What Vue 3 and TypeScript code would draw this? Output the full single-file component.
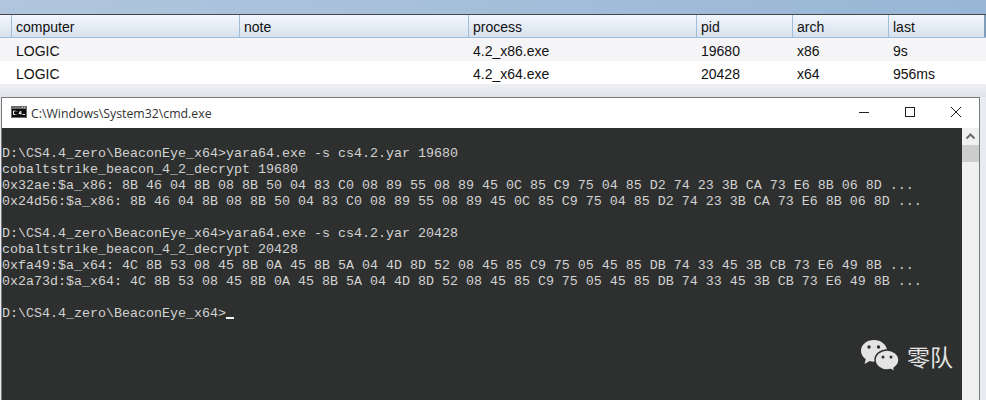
<script setup lang="ts">
const columns = [
  { name: 'computer', width: 228 },
  { name: 'note', width: 229 },
  { name: 'process', width: 228 },
  { name: 'pid', width: 96 },
  { name: 'arch', width: 96 },
  { name: 'last', width: 96 },
]
const rows = [
  ['LOGIC', '', '4.2_x86.exe', '19680', 'x86', '9s'],
  ['LOGIC', '', '4.2_x64.exe', '20428', 'x64', '956ms'],
]
const lines = [
  '',
  'D:\\CS4.4_zero\\BeaconEye_x64>yara64.exe -s cs4.2.yar 19680',
  'cobaltstrike_beacon_4_2_decrypt 19680',
  '0x32ae:$a_x86: 8B 46 04 8B 08 8B 50 04 83 C0 08 89 55 08 89 45 0C 85 C9 75 04 85 D2 74 23 3B CA 73 E6 8B 06 8D ...',
  '0x24d56:$a_x86: 8B 46 04 8B 08 8B 50 04 83 C0 08 89 55 08 89 45 0C 85 C9 75 04 85 D2 74 23 3B CA 73 E6 8B 06 8D ...',
  '',
  'D:\\CS4.4_zero\\BeaconEye_x64>yara64.exe -s cs4.2.yar 20428',
  'cobaltstrike_beacon_4_2_decrypt 20428',
  '0xfa49:$a_x64: 4C 8B 53 08 45 8B 0A 45 8B 5A 04 4D 8D 52 08 45 85 C9 75 05 45 85 DB 74 33 45 3B CB 73 E6 49 8B ...',
  '0x2a73d:$a_x64: 4C 8B 53 08 45 8B 0A 45 8B 5A 04 4D 8D 52 08 45 85 C9 75 05 45 85 DB 74 33 45 3B CB 73 E6 49 8B ...',
  '',
]
</script>

<template>
  <div class="page">
    <div class="top-bar"></div>
    <div class="table">
      <div class="head">
        <div class="gutter"></div>
        <div v-for="c in columns" :key="c.name" class="th" :style="{ width: c.width + 'px' }">{{ c.name }}</div>
        <div class="head-end"></div>
      </div>
      <div v-for="(r, i) in rows" :key="i" class="row" :class="{ odd: i === 0 }">
        <div class="gutter-cell"></div>
        <div v-for="(v, j) in r" :key="j" class="td" :style="{ width: columns[j].width + 'px' }">{{ v }}</div>
      </div>
      <div class="spacer"></div>
    </div>
    <div class="window">
      <div class="title">
        <svg class="cmd-icon" width="16" height="12" viewBox="0 0 16 12">
          <rect x="0" y="0" width="16" height="12" fill="#6f6f6f" />
          <rect x="1" y="3" width="14" height="8" fill="#0a0a0a" />
          <path d="M11 1.500H12M13 1.500H14" stroke="#d8d8d8" fill="none" />
          <path d="M4.500 5H2.500V8.500H4.500M6 5.500V6M6 8V8.500M9.500 5L8 7.500H10.500M9.800 5V8.500M11.500 8.500H14" stroke="#f2f2f2" stroke-width="1" fill="none" />
        </svg>
        <span class="title-text">C:\Windows\System32\cmd.exe</span>
        <div class="controls">
          <svg width="12" height="12" viewBox="0 0 12 12"><path d="M1 6.500H11" stroke="#222" fill="none" /></svg>
          <svg width="12" height="12" viewBox="0 0 12 12"><rect x="1.500" y="1.500" width="9" height="9" stroke="#222" fill="none" /></svg>
          <svg width="12" height="12" viewBox="0 0 12 12"><path d="M1 1L11 11M11 1L1 11" stroke="#222" fill="none" /></svg>
        </div>
      </div>
      <div class="body">
        <div class="console">
          <pre class="text"><template v-for="(l, i) in lines" :key="i">{{ l }}
</template>D:\CS4.4_zero\BeaconEye_x64&gt;<span class="cursor"></span></pre>
          <div class="mark">
            <svg width="40" height="34" viewBox="0 0 40 34">
              <path d="M14 1C6.500 1 1 5.800 1 11.800C1 15.300 2.900 18.200 5.800 20.200L4.500 25L9.600 22.100C11 22.500 12.400 22.700 14 22.700C21 22.700 27 18 27 11.800C27 5.800 21 1 14 1Z" fill="#e4e4e4" />
              <path d="M27 11C20.500 11 15 15.500 15 21C15 26.500 20.500 31 27 31C28.300 31 29.500 30.800 30.700 30.500L35 33L34 29C37 27 39 24.200 39 21C39 15.500 33.500 11 27 11Z" fill="#e4e4e4" stroke="#2e302f" stroke-width="1.500" />
              <circle cx="9" cy="8" r="1.700" fill="#2e302f" />
              <circle cx="18.500" cy="8" r="1.700" fill="#2e302f" />
              <circle cx="23" cy="18" r="1.500" fill="#2e302f" />
              <circle cx="31" cy="18" r="1.500" fill="#2e302f" />
            </svg>
            <span class="mark-text">零队</span>
          </div>
        </div>
        <div class="scroll">
          <svg class="arrow" width="17" height="17" viewBox="0 0 17 17"><path d="M4.500 10.500L8.500 6.500L12.500 10.500" stroke="#6a6a6a" stroke-width="2" fill="none" /></svg>
          <div class="thumb"></div>
        </div>
      </div>
    </div>
  </div>
</template>

<style>
html, body { margin: 0; background: #e8ebef; overflow: hidden; }
</style>

<style scoped>
.page { width: 986px; height: 400px; display: flex; flex-direction: column; overflow: hidden; font-family: "Liberation Sans", Arial, sans-serif; }
.top-bar { height: 14px; flex: none; background: linear-gradient(90deg, #b1c6de, #98b6d6); }
.table { flex: none; background: #fff; border-top: 1px solid #44474c; }
.head { display: flex; height: 22px; background: linear-gradient(180deg, #f3f7fd, #d7e1ed); border-bottom: 1px solid #9fbcd8; }
.gutter, .gutter-cell { width: 11px; flex: none; }
.th { flex: none; box-sizing: border-box; border-left: 1px solid #9fbcd8; padding-left: 4px; font-size: 14px; line-height: 25px; color: #111; }
.head-end { flex: 1; background: #7f9dbb; }
.row { display: flex; height: 23px; background: #fff; }
.row.odd { background: #f5f5f8; }
.td { flex: none; box-sizing: border-box; padding-left: 5px; font-size: 14px; line-height: 27px; color: #111; }
.spacer { height: 13px; background: linear-gradient(180deg, #eef0f3, #dfe3e8); }
.window { flex: 1; margin: 0 6px 0 1px; border: 1px solid #77797c; border-bottom: 0; display: flex; flex-direction: column; min-height: 0; }
.title { height: 30px; flex: none; display: flex; align-items: center; background: #fff; padding-left: 9px; }
.cmd-icon { flex: none; margin-bottom: 2px; }
.title-text { margin-left: 4px; font-size: 12.300px; color: #333; font-family: "Open Sans", "Liberation Sans", sans-serif; }
.controls { margin-left: auto; display: flex; gap: 34px; padding-right: 17px; margin-bottom: 2px; }
.body { flex: 1; display: flex; min-height: 0; }
.console { flex: 1; position: relative; background: #2e302f; min-width: 0; }
.text { margin: 0; padding-top: 2px; font-family: "Liberation Mono", monospace; font-size: 13.333px; line-height: 16px; color: #d2d2d2; white-space: pre; }
.cursor { display: inline-block; width: 8px; height: 2px; background: #f4f4f4; vertical-align: -2px; }
.mark { position: absolute; right: 9px; bottom: 27px; display: flex; align-items: center; gap: 7px; }
.mark-text { font-family: "Noto Sans CJK SC", sans-serif; font-size: 23px; line-height: 30px; color: #e4e4e4; }
.scroll { width: 17px; flex: none; background: #f0f0f0; }
.arrow { display: block; }
.thumb { height: 17px; background: #cdcdcd; }
</style>
